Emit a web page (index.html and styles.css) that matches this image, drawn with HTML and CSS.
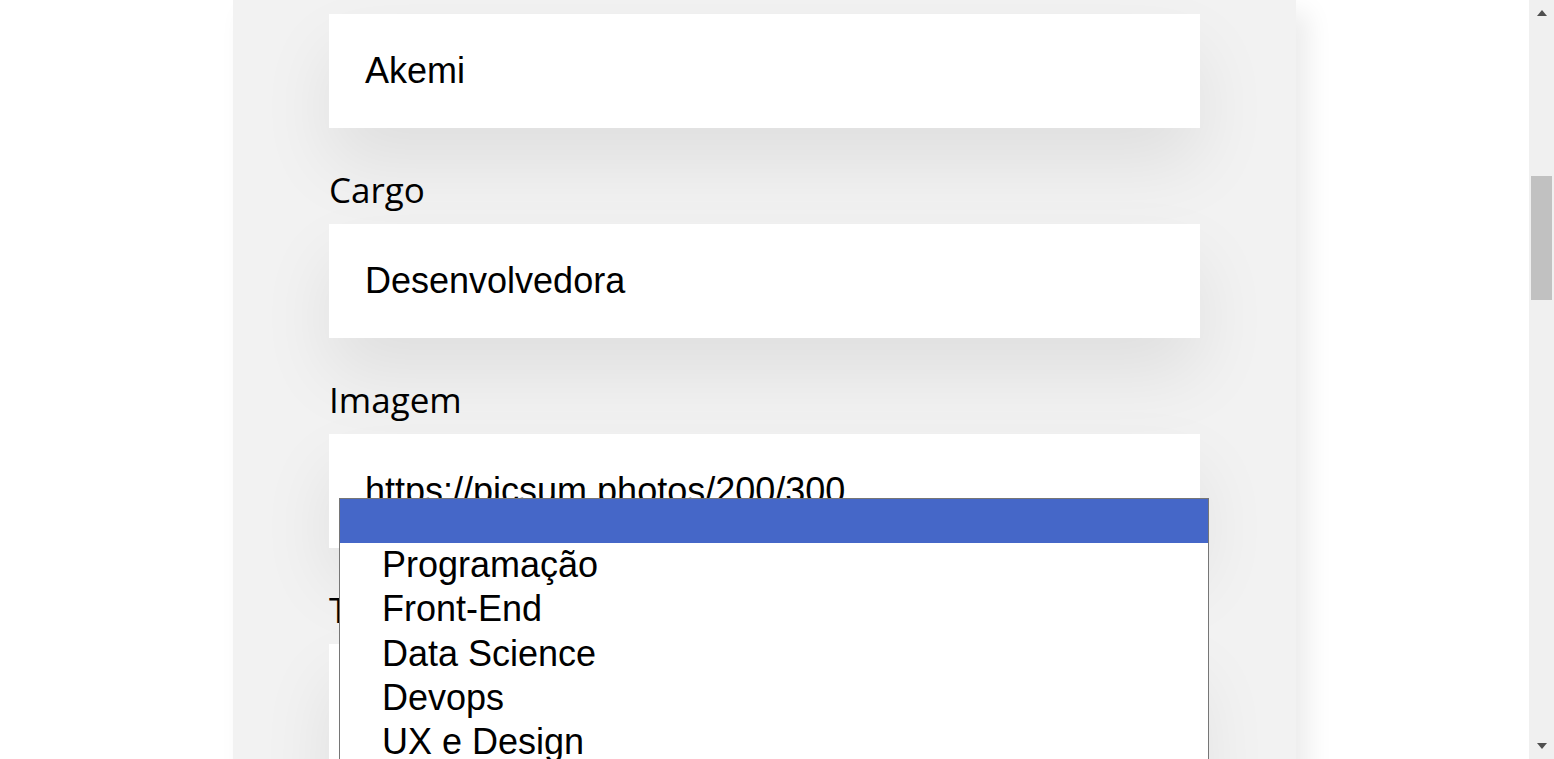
FILE: index.html
```html
<!DOCTYPE html>
<html lang="pt-BR">
<head>
<meta charset="utf-8">
<title>Organo</title>
<link rel="stylesheet" href="styles.css">
</head>
<body>
<main class="page">
  <section class="formulario">
    <form class="form">
      <div class="campo">
        <div class="input">Akemi</div>
      </div>
      <div class="campo">
        <label class="label">Cargo</label>
        <div class="input">Desenvolvedora</div>
      </div>
      <div class="campo">
        <label class="label">Imagem</label>
        <div class="input">https://picsum.photos/200/300</div>
      </div>
      <div class="campo campo-time">
        <label class="label">Time</label>
        <div class="input select"></div>
        <ul class="dropdown">
          <li class="option selected"></li>
          <li class="option">Programação</li>
          <li class="option">Front-End</li>
          <li class="option">Data Science</li>
          <li class="option">Devops</li>
          <li class="option">UX e Design</li>
          <li class="option">Mobile</li>
          <li class="option">Inovação e Gestão</li>
        </ul>
      </div>
    </form>
  </section>
</main>
<div class="scrollbar">
  <div class="arrow arrow-up"></div>
  <div class="track"><div class="thumb"></div></div>
  <div class="arrow arrow-down"></div>
</div>
</body>
</html>
```

FILE: styles.css
```css
html, body {
  margin: 0;
  padding: 0;
  height: 759px;
  overflow: hidden;
  background: #ffffff;
}

body {
  display: flex;
}

.page {
  flex: 1;
  display: flex;
  justify-content: center;
  height: 759px;
  overflow: hidden;
}

.formulario {
  width: 1063px;
  height: 1200px;
  box-sizing: border-box;
  background: #f2f2f2;
  padding: 14px 96px 0;
  box-shadow: 12px 12px 24px rgba(0, 0, 0, 0.08);
}

.form {
  position: relative;
}

.campo {
  margin-bottom: 36px;
  position: relative;
}

.label {
  display: block;
  font-family: "Open Sans", "Noto Sans", sans-serif;
  font-size: 35px;
  line-height: 51px;
  color: #000;
  margin-bottom: 9px;
}

.input {
  background: #ffffff;
  height: 114px;
  box-sizing: border-box;
  padding: 0 36px;
  display: flex;
  align-items: center;
  font-family: "Liberation Sans", Arial, sans-serif;
  font-size: 36px;
  color: #000;
  box-shadow: 0 36px 72px rgba(0, 0, 0, 0.08);
  overflow: hidden;
  white-space: nowrap;
}

.input.select {
  height: 200px;
}

.dropdown {
  position: absolute;
  left: 10px;
  top: -86px;
  width: 870px;
  box-sizing: border-box;
  margin: 0;
  padding: 0;
  list-style: none;
  background: #ffffff;
  border: 1px solid #767676;
  font-family: "Liberation Sans", Arial, sans-serif;
  font-size: 36px;
  color: #000;
}

.option {
  height: 44.3px;
  line-height: 44.3px;
  padding-left: 42px;
  white-space: nowrap;
}

.option.selected {
  background: #4567c8;
  height: 44px;
}

.scrollbar {
  width: 25px;
  height: 759px;
  background: #f0f0f0;
  display: flex;
  flex-direction: column;
  align-items: center;
}

.arrow {
  width: 0;
  height: 0;
  border-left: 5.5px solid transparent;
  border-right: 5.5px solid transparent;
}

.arrow-up {
  margin-top: 10px;
  border-bottom: 6px solid #505050;
}

.arrow-down {
  margin-bottom: 10px;
  border-top: 6px solid #505050;
}

.track {
  flex: 1;
  width: 100%;
  padding-top: 160px;
  box-sizing: border-box;
  display: flex;
  justify-content: center;
}

.thumb {
  width: 21px;
  height: 124px;
  background: #c1c1c1;
}
```
